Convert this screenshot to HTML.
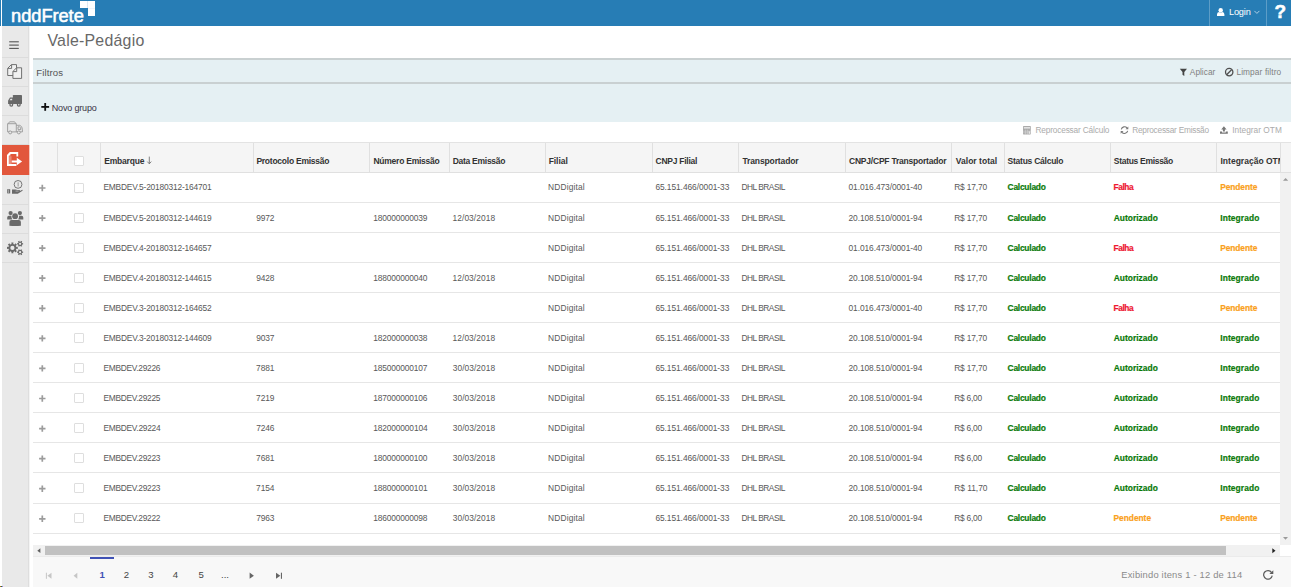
<!DOCTYPE html>
<html lang="pt-BR"><head><meta charset="utf-8"><title>nddFrete - Vale-Pedágio</title>
<style>
html,body{margin:0;padding:0;}
body{width:1291px;height:587px;overflow:hidden;background:#fff;position:relative;font-family:"Liberation Sans",sans-serif;}
.t{position:absolute;white-space:nowrap;line-height:normal;display:block;}
.b{position:absolute;}
svg{position:absolute;overflow:visible;}
</style></head><body>

<div class="b" style="left:0px;top:0px;width:1px;height:26px;background:#277db5;"></div>
<div class="b" style="left:2px;top:0px;width:1289px;height:26px;background:#277db5;"></div>
<div class="b" style="left:1209px;top:0px;width:1px;height:26px;background:rgba(255,255,255,.25);"></div>
<div class="b" style="left:1266px;top:0px;width:1px;height:26px;background:rgba(255,255,255,.25);"></div>
<div class="b" style="left:80px;top:1px;width:15px;height:7px;background:#fff;"></div>
<div class="b" style="left:88px;top:1px;width:7px;height:15px;background:#fff;"></div>
<div class="b" style="left:87px;top:1px;width:1px;height:7px;background:#dde9f3;"></div>
<div class="b" style="left:88px;top:8px;width:7px;height:1px;background:#f1f6fa;"></div>
<div class="b" style="left:2px;top:26px;width:27px;height:561px;background:#e9e9e9;border-right:1px solid #dedede;box-sizing:border-box;"></div>
<div class="b" style="left:29px;top:26px;width:1px;height:561px;background:#f4f4f4;"></div>
<div class="b" style="left:2px;top:57px;width:27px;height:1px;background:#dcdcdc;"></div>
<div class="b" style="left:2px;top:86px;width:27px;height:1px;background:#dcdcdc;"></div>
<div class="b" style="left:2px;top:115px;width:27px;height:1px;background:#dcdcdc;"></div>
<div class="b" style="left:2px;top:144px;width:27px;height:1px;background:#dcdcdc;"></div>
<div class="b" style="left:2px;top:204px;width:27px;height:1px;background:#dcdcdc;"></div>
<div class="b" style="left:2px;top:233px;width:27px;height:1px;background:#dcdcdc;"></div>
<div class="b" style="left:2px;top:262px;width:27px;height:1px;background:#dcdcdc;"></div>
<div class="b" style="left:2px;top:145px;width:27px;height:30px;background:#e2573c;"></div>
<div class="b" style="left:29px;top:145px;width:1px;height:30px;background:#f5c9c0;"></div>
<div class="b" style="left:33px;top:58px;width:1258px;height:64px;background:#e5f0f3;"></div>
<div class="b" style="left:33px;top:58px;width:1258px;height:2px;background:#c9d0d1;"></div>
<div class="b" style="left:33px;top:82px;width:1258px;height:2px;background:#c9d0d1;"></div>
<div class="b" style="left:33px;top:142px;width:1258px;height:31px;background:#f5f5f5;"></div>
<div class="b" style="left:33px;top:142px;width:1258px;height:1px;background:#e3e3e3;"></div>
<div class="b" style="left:33px;top:172px;width:1258px;height:1px;background:#e0e0e0;"></div>
<div class="b" style="left:57px;top:143px;width:1px;height:29px;background:#e0e0e0;"></div>
<div class="b" style="left:100px;top:143px;width:1px;height:29px;background:#e0e0e0;"></div>
<div class="b" style="left:253px;top:143px;width:1px;height:29px;background:#e0e0e0;"></div>
<div class="b" style="left:369px;top:143px;width:1px;height:29px;background:#e0e0e0;"></div>
<div class="b" style="left:449px;top:143px;width:1px;height:29px;background:#e0e0e0;"></div>
<div class="b" style="left:545px;top:143px;width:1px;height:29px;background:#e0e0e0;"></div>
<div class="b" style="left:652px;top:143px;width:1px;height:29px;background:#e0e0e0;"></div>
<div class="b" style="left:738px;top:143px;width:1px;height:29px;background:#e0e0e0;"></div>
<div class="b" style="left:845px;top:143px;width:1px;height:29px;background:#e0e0e0;"></div>
<div class="b" style="left:951px;top:143px;width:1px;height:29px;background:#e0e0e0;"></div>
<div class="b" style="left:1004px;top:143px;width:1px;height:29px;background:#e0e0e0;"></div>
<div class="b" style="left:1110px;top:143px;width:1px;height:29px;background:#e0e0e0;"></div>
<div class="b" style="left:1216px;top:143px;width:1px;height:29px;background:#e0e0e0;"></div>
<div class="b" style="left:1280px;top:143px;width:1px;height:29px;background:#e0e0e0;"></div>
<div class="b" style="left:33px;top:202px;width:1247px;height:1px;background:#e6e6e6;"></div>
<div class="b" style="left:33px;top:232px;width:1247px;height:1px;background:#e6e6e6;"></div>
<div class="b" style="left:33px;top:262px;width:1247px;height:1px;background:#e6e6e6;"></div>
<div class="b" style="left:33px;top:292px;width:1247px;height:1px;background:#e6e6e6;"></div>
<div class="b" style="left:33px;top:322px;width:1247px;height:1px;background:#e6e6e6;"></div>
<div class="b" style="left:33px;top:352px;width:1247px;height:1px;background:#e6e6e6;"></div>
<div class="b" style="left:33px;top:382px;width:1247px;height:1px;background:#e6e6e6;"></div>
<div class="b" style="left:33px;top:412px;width:1247px;height:1px;background:#e6e6e6;"></div>
<div class="b" style="left:33px;top:442px;width:1247px;height:1px;background:#e6e6e6;"></div>
<div class="b" style="left:33px;top:472px;width:1247px;height:1px;background:#e6e6e6;"></div>
<div class="b" style="left:33px;top:503px;width:1247px;height:1px;background:#e6e6e6;"></div>
<div class="b" style="left:33px;top:533px;width:1247px;height:1px;background:#e6e6e6;"></div>
<div class="b" style="left:1280px;top:173px;width:11px;height:372px;background:#f1f1f1;"></div>
<div class="b" style="left:33px;top:545px;width:1247px;height:11px;background:#f1f1f1;"></div>
<div class="b" style="left:45px;top:546px;width:1181px;height:9px;background:#c1c1c1;"></div>
<div class="b" style="left:33px;top:556px;width:1258px;height:31px;background:#f8f8f8;"></div>
<div class="b" style="left:33px;top:556px;width:1258px;height:1px;background:#ebebeb;"></div>
<div class="b" style="left:90px;top:557px;width:24px;height:2px;background:#3f51b5;"></div>
<div class="b" style="left:74px;top:156px;width:10px;height:10px;background:#fff;border:1px solid #dedede;box-sizing:border-box;border-radius:1px;"></div>
<div class="b" style="left:74px;top:183px;width:10px;height:10px;background:#fff;border:1px solid #dedede;box-sizing:border-box;border-radius:1px;"></div>
<div class="b" style="left:74px;top:213px;width:10px;height:10px;background:#fff;border:1px solid #dedede;box-sizing:border-box;border-radius:1px;"></div>
<div class="b" style="left:74px;top:243px;width:10px;height:10px;background:#fff;border:1px solid #dedede;box-sizing:border-box;border-radius:1px;"></div>
<div class="b" style="left:74px;top:273px;width:10px;height:10px;background:#fff;border:1px solid #dedede;box-sizing:border-box;border-radius:1px;"></div>
<div class="b" style="left:74px;top:303px;width:10px;height:10px;background:#fff;border:1px solid #dedede;box-sizing:border-box;border-radius:1px;"></div>
<div class="b" style="left:74px;top:333px;width:10px;height:10px;background:#fff;border:1px solid #dedede;box-sizing:border-box;border-radius:1px;"></div>
<div class="b" style="left:74px;top:363px;width:10px;height:10px;background:#fff;border:1px solid #dedede;box-sizing:border-box;border-radius:1px;"></div>
<div class="b" style="left:74px;top:393px;width:10px;height:10px;background:#fff;border:1px solid #dedede;box-sizing:border-box;border-radius:1px;"></div>
<div class="b" style="left:74px;top:423px;width:10px;height:10px;background:#fff;border:1px solid #dedede;box-sizing:border-box;border-radius:1px;"></div>
<div class="b" style="left:74px;top:453px;width:10px;height:10px;background:#fff;border:1px solid #dedede;box-sizing:border-box;border-radius:1px;"></div>
<div class="b" style="left:74px;top:483px;width:10px;height:10px;background:#fff;border:1px solid #dedede;box-sizing:border-box;border-radius:1px;"></div>
<div class="b" style="left:74px;top:513px;width:10px;height:10px;background:#fff;border:1px solid #dedede;box-sizing:border-box;border-radius:1px;"></div>
<div class="b" style="left:0px;top:586px;width:1px;height:1px;background:#c06a10;"></div>
<div class="b" style="left:1px;top:586px;width:1px;height:1px;background:#1a7a50;"></div>
<div class="b" style="left:2px;top:586px;width:1px;height:1px;background:#a070e0;"></div>
<svg width="1291" height="587" viewBox="0 0 1291 587" style="left:0;top:0">
<rect x="9.2" y="41.25" width="9.6" height="1.1" fill="#555"/>
<rect x="9.2" y="44.55" width="9.6" height="1.1" fill="#555"/>
<rect x="9.2" y="47.85" width="9.6" height="1.1" fill="#555"/>
<g fill="none" stroke="#6a6a6a" stroke-width="0.95" stroke-linejoin="round"><path d="M11.4,64.6 H16.5 V75.5 H7.7 V68.3 Z" fill="#f1f1f1"/><path d="M11.6,64.8 V68.4 H7.9"/><path d="M16.5,67.8 H21.6 V78.4 H12.9 V71.5 Z" fill="#f1f1f1"/><path d="M16.7,68 V71.6 H13.1"/></g>
<g fill="#686868"><rect x="12.9" y="95.1" width="9.1" height="8.9" rx="0.4"/><path d="M8.1,104 V100.4 L10,97.4 H13 V104 Z"/><circle cx="11.3" cy="104.8" r="2"/><circle cx="18.8" cy="104.8" r="2"/></g><circle cx="11.3" cy="104.8" r="0.8" fill="#e9e9e9"/><circle cx="18.8" cy="104.8" r="0.8" fill="#e9e9e9"/><path d="M9.6,100.3 L10.6,98.8 H12.2 V100.3 Z" fill="#e9e9e9"/>
<g fill="none" stroke="#949494" stroke-width="0.85" stroke-linejoin="round"><path d="M7.6,123.7 H16.3 V131.9 H7.6 Z"/><path d="M8.2,123.6 L9.6,121.8 H14.6 L15.8,123.6"/><path d="M16.3,125.3 H19.8 Q22.3,126.2 22.4,129.4 V131.9 H16.3"/><path d="M18,126.8 H19.6 Q20.8,127.4 20.9,129.6 H18 Z"/><circle cx="10.2" cy="132.4" r="1.5" fill="#e9e9e9"/><circle cx="18.8" cy="132.4" r="1.5" fill="#e9e9e9"/></g>
<g fill="none" stroke="#fff" stroke-width="1.8" stroke-linejoin="miter"><path d="M17.3,156.6 V153 H10.2 L7.9,155.4 V165 H16.4"/></g><path d="M11.7,160.5 H16.8 V157.7 L22.1,161.5 L16.8,165.3 V162.5 H11.7 Z" fill="#fff"/><rect x="8.8" y="156.2" width="2.7" height="7.9" fill="#fff" opacity="0.3"/><path d="M7.1,155.6 L10.4,152.2 V155.6 Z" fill="#fff"/>
<circle cx="18.05" cy="184.4" r="3.9" fill="none" stroke="#6a6a6a" stroke-width="0.9"/><rect x="17.7" y="182.3" width="0.8" height="4.2" fill="#888"/><rect x="7.2" y="189.2" width="3" height="4.2" fill="#6a6a6a"/><path d="M12,189.4 H15.4 Q16.6,189.4 17.4,189.9 H19.2 Q20.2,190 20,190.9 Q19.8,191.4 19,191.4 L21.8,189.9 Q23,189.7 22.5,190.7 L18.6,193.3 Q17.8,193.8 16.8,193.8 H12 Z" fill="#6a6a6a"/><path d="M15.5,191.1 H18.6" stroke="#e9e9e9" stroke-width="0.5"/><rect x="8.3" y="189.6" width="0.7" height="3.4" fill="#bbb"/>
<g fill="#6a6a6a"><circle cx="10.6" cy="213.1" r="2.1"/><circle cx="19.9" cy="213.1" r="2.1"/><path d="M7.2,219.4 V217.4 Q7.2,215.7 8.9,215.7 H11.4 Q11.2,217.4 12.3,219.4 Z"/><path d="M23.3,219.4 V217.4 Q23.3,215.7 21.6,215.7 H19.1 Q19.3,217.4 18.2,219.4 Z"/><circle cx="15.1" cy="216.2" r="2.9"/><path d="M9.4,225.7 V222 Q9.4,219.9 11.5,219.9 H18.8 Q20.9,219.9 20.9,222 V225.7 Q15.1,226.3 9.4,225.7 Z"/></g>
<path fill-rule="evenodd" fill="#6a6a6a" d="M17.79,246.83 L17.79,248.97 L16.41,248.76 L15.84,250.12 L16.97,250.96 L15.46,252.47 L14.62,251.34 L13.26,251.91 L13.47,253.29 L11.33,253.29 L11.54,251.91 L10.18,251.34 L9.34,252.47 L7.83,250.96 L8.96,250.12 L8.39,248.76 L7.01,248.97 L7.01,246.83 L8.39,247.04 L8.96,245.68 L7.83,244.84 L9.34,243.33 L10.18,244.46 L11.54,243.89 L11.33,242.51 L13.47,242.51 L13.26,243.89 L14.62,244.46 L15.46,243.33 L16.97,244.84 L15.84,245.68 L16.41,247.04 Z M10.30,247.90 a2.10,2.10 0 1,0 4.20,0 a2.10,2.10 0 1,0 -4.20,0 Z"/>
<path fill-rule="evenodd" fill="#6a6a6a" d="M23.09,243.00 L23.09,244.60 L22.21,244.41 L21.69,245.32 L22.29,245.99 L20.90,246.79 L20.62,245.94 L19.58,245.94 L19.30,246.79 L17.91,245.99 L18.51,245.32 L17.99,244.41 L17.11,244.60 L17.11,243.00 L17.99,243.19 L18.51,242.28 L17.91,241.61 L19.30,240.81 L19.58,241.66 L20.62,241.66 L20.90,240.81 L22.29,241.61 L21.69,242.28 L22.21,243.19 Z M19.00,243.80 a1.10,1.10 0 1,0 2.20,0 a1.10,1.10 0 1,0 -2.20,0 Z"/>
<path fill-rule="evenodd" fill="#6a6a6a" d="M23.09,251.40 L23.09,253.00 L22.21,252.81 L21.69,253.72 L22.29,254.39 L20.90,255.19 L20.62,254.34 L19.58,254.34 L19.30,255.19 L17.91,254.39 L18.51,253.72 L17.99,252.81 L17.11,253.00 L17.11,251.40 L17.99,251.59 L18.51,250.68 L17.91,250.01 L19.30,249.21 L19.58,250.06 L20.62,250.06 L20.90,249.21 L22.29,250.01 L21.69,250.68 L22.21,251.59 Z M19.00,252.20 a1.10,1.10 0 1,0 2.20,0 a1.10,1.10 0 1,0 -2.20,0 Z"/>
<circle cx="1220.7" cy="10.2" r="2.2" fill="#fff"/><path d="M1217,16 V14.6 Q1217,12.2 1219,12.0 Q1220.7,13.2 1222.4,12.0 Q1224.4,12.2 1224.4,14.6 V16 Z" fill="#fff"/>
<path d="M1254.4,10.9 L1256.9,13.4 L1259.4,10.9" fill="none" stroke="#cfe3f0" stroke-width="0.8"/>
<path d="M1179.8,68.8 H1187 L1184.3,72 V76 L1182.5,74.8 V72 Z" fill="#444"/>
<circle cx="1229.2" cy="72.1" r="3.7" fill="none" stroke="#505050" stroke-width="1.3"/><path d="M1231.8,69.5 L1226.6,74.7" stroke="#505050" stroke-width="1.3"/>
<path d="M39.1,188.0 H45.5 M42.3,184.8 V191.2" stroke="#9c9c9c" stroke-width="1.7" fill="none"/>
<path d="M39.1,218.1 H45.5 M42.3,214.9 V221.3" stroke="#9c9c9c" stroke-width="1.7" fill="none"/>
<path d="M39.1,248.1 H45.5 M42.3,244.9 V251.3" stroke="#9c9c9c" stroke-width="1.7" fill="none"/>
<path d="M39.1,278.2 H45.5 M42.3,275.0 V281.4" stroke="#9c9c9c" stroke-width="1.7" fill="none"/>
<path d="M39.1,308.3 H45.5 M42.3,305.1 V311.5" stroke="#9c9c9c" stroke-width="1.7" fill="none"/>
<path d="M39.1,338.4 H45.5 M42.3,335.2 V341.6" stroke="#9c9c9c" stroke-width="1.7" fill="none"/>
<path d="M39.1,368.4 H45.5 M42.3,365.2 V371.6" stroke="#9c9c9c" stroke-width="1.7" fill="none"/>
<path d="M39.1,398.5 H45.5 M42.3,395.3 V401.7" stroke="#9c9c9c" stroke-width="1.7" fill="none"/>
<path d="M39.1,428.6 H45.5 M42.3,425.4 V431.8" stroke="#9c9c9c" stroke-width="1.7" fill="none"/>
<path d="M39.1,458.6 H45.5 M42.3,455.4 V461.8" stroke="#9c9c9c" stroke-width="1.7" fill="none"/>
<path d="M39.1,488.7 H45.5 M42.3,485.5 V491.9" stroke="#9c9c9c" stroke-width="1.7" fill="none"/>
<path d="M39.1,518.8 H45.5 M42.3,515.6 V522.0" stroke="#9c9c9c" stroke-width="1.7" fill="none"/>
<rect x="41.3" y="106" width="7.8" height="1.8" fill="#111"/><rect x="44.3" y="103" width="1.8" height="7.8" fill="#111"/>
<rect x="1023" y="126" width="7.8" height="8.4" rx="0.6" fill="#aaa"/><rect x="1023.8" y="127.2" width="6.2" height="1.3" fill="#fff" opacity=".8"/><g stroke="#fff" stroke-width="0.4" opacity=".7"><path d="M1025.6,129.6V134.4M1027.6,129.6V134.4M1023,131.2H1030.8M1023,132.8H1028"/></g><rect x="1028.6" y="131.4" width="1.6" height="2.4" fill="#fff" opacity=".7"/>
<g fill="none" stroke="#777" stroke-width="1.1"><path d="M1121.3,129.3 A3.3,3.3 0 0 1 1127,127.9"/><path d="M1127.7,130.9 A3.3,3.3 0 0 1 1122,132.3"/></g><path d="M1128.3,126.5 V129.3 H1125.5 Z" fill="#777"/><path d="M1120.7,133.7 V130.9 H1123.5 Z" fill="#777"/>
<path d="M1223.9,126.3 L1226.6,129.4 H1224.9 V131.6 H1222.9 V129.4 H1221.2 Z" fill="#777"/><path d="M1220,131.4 H1222 V132.4 H1225.8 V131.4 H1227.8 V133.8 H1220 Z" fill="#777"/>
<path d="M149.3,156.6 V163.6 M147.3,161.6 L149.3,163.8 L151.3,161.6" fill="none" stroke="#666" stroke-width="0.8"/>
<path d="M1283,180.8 L1285.6,178 L1288.2,180.8 Z" fill="#9a9a9a"/>
<path d="M1283,537 L1285.5,539.7 L1288,537 Z" fill="#9a9a9a"/>
<path d="M40.4,548.3 V553 L37.3,550.65 Z" fill="#606060"/>
<path d="M1272.3,548.3 V553.3 L1275.5,550.8 Z" fill="#222"/>
<rect x="45.9" y="572.7" width="1" height="6.1" fill="#c6c6c6"/><path d="M51.5,572.7 V578.8 L47.4,575.75 Z" fill="#c6c6c6"/>
<path d="M77.3,572.7 V578.8 L73.6,575.75 Z" fill="#c6c6c6"/>
<path d="M249.6,572.5 V578.8 L253.9,575.65 Z" fill="#666"/>
<path d="M276,572.7 V578.8 L280.3,575.75 Z" fill="#666"/><rect x="280.9" y="572.7" width="1.1" height="6.1" fill="#666"/>
<path d="M1271.6,572.6 A4.3,4.3 0 1 0 1272.2,575.6" fill="none" stroke="#5c5c5c" stroke-width="1.25"/><path d="M1273.3,570.2 V574.1 H1269.4 Z" fill="#5c5c5c"/>
</svg>
<span id="t1" class="t" style="left:11.08px;top:5px;font-size:18.3px;font-weight:400;color:#fff;letter-spacing:-0.065px;-webkit-text-stroke:0.55px #fff;">nddFrete</span>
<span id="t2" class="t" style="left:1228.93px;top:7px;font-size:9.2px;font-weight:400;color:#fff;letter-spacing:-0.143px;">Login</span>
<span id="t3" class="t" style="left:1274.60px;top:1px;font-size:19px;font-weight:700;color:#fff;-webkit-text-stroke:0.5px #fff;">?</span>
<span id="t4" class="t" style="left:47.40px;top:32px;font-size:15.9px;font-weight:400;color:#686868;letter-spacing:0.241px;">Vale-Pedágio</span>
<span id="t5" class="t" style="left:36.31px;top:67px;font-size:9.6px;font-weight:400;color:#555;letter-spacing:0.092px;">Filtros</span>
<span id="t6" class="t" style="left:51.77px;top:103px;font-size:9.0px;font-weight:400;color:#3a3344;letter-spacing:-0.173px;">Novo grupo</span>
<span id="t7" class="t" style="left:1189.83px;top:67px;font-size:8.3px;font-weight:400;color:#808080;letter-spacing:0.018px;">Aplicar</span>
<span id="t8" class="t" style="left:1236.42px;top:67px;font-size:8.3px;font-weight:400;color:#808080;letter-spacing:0.115px;">Limpar filtro</span>
<span id="t9" class="t" style="left:1035.42px;top:125px;font-size:8.3px;font-weight:400;color:#ababab;letter-spacing:-0.163px;">Reprocessar Cálculo</span>
<span id="t10" class="t" style="left:1132.22px;top:125px;font-size:8.3px;font-weight:400;color:#ababab;letter-spacing:-0.241px;">Reprocessar Emissão</span>
<span id="t11" class="t" style="left:1232.19px;top:125px;font-size:8.3px;font-weight:400;color:#ababab;letter-spacing:0.025px;">Integrar OTM</span>
<span id="t12" class="t" style="left:104.18px;top:156px;font-size:8.5px;font-weight:700;color:#333;letter-spacing:-0.182px;">Embarque</span>
<span id="t13" class="t" style="left:256.38px;top:156px;font-size:8.5px;font-weight:700;color:#333;letter-spacing:-0.245px;">Protocolo Emissão</span>
<span id="t14" class="t" style="left:373.38px;top:156px;font-size:8.5px;font-weight:700;color:#333;letter-spacing:-0.233px;">Número Emissão</span>
<span id="t15" class="t" style="left:452.68px;top:156px;font-size:8.5px;font-weight:700;color:#333;letter-spacing:-0.269px;">Data Emissão</span>
<span id="t16" class="t" style="left:548.68px;top:156px;font-size:8.5px;font-weight:700;color:#333;letter-spacing:-0.052px;">Filial</span>
<span id="t17" class="t" style="left:655.62px;top:156px;font-size:8.5px;font-weight:700;color:#333;letter-spacing:-0.261px;">CNPJ Filial</span>
<span id="t18" class="t" style="left:742.45px;top:156px;font-size:8.5px;font-weight:700;color:#333;letter-spacing:-0.119px;">Transportador</span>
<span id="t19" class="t" style="left:849.02px;top:156px;font-size:8.5px;font-weight:700;color:#333;letter-spacing:-0.219px;">CNPJ/CPF Transportador</span>
<span id="t20" class="t" style="left:955.81px;top:156px;font-size:8.5px;font-weight:700;color:#333;letter-spacing:0.020px;">Valor total</span>
<span id="t21" class="t" style="left:1007.57px;top:156px;font-size:8.5px;font-weight:700;color:#333;letter-spacing:-0.248px;">Status Cálculo</span>
<span id="t22" class="t" style="left:1113.87px;top:156px;font-size:8.5px;font-weight:700;color:#333;letter-spacing:-0.307px;">Status Emissão</span>
<span id="t23" class="t" style="left:1220.47px;top:156px;font-size:8.5px;font-weight:700;color:#333;letter-spacing:0.014px;width:59.3px;overflow:hidden;">Integração OTM</span>
<span id="t24" class="t" style="left:103.38px;top:182px;font-size:8.4px;font-weight:400;color:#585858;letter-spacing:-0.180px;">EMBDEV.5-20180312-164701</span>
<span id="t25" class="t" style="left:548.12px;top:182px;font-size:8.4px;font-weight:400;color:#585858;letter-spacing:0.148px;">NDDigital</span>
<span id="t26" class="t" style="left:655.38px;top:182px;font-size:8.4px;font-weight:400;color:#585858;letter-spacing:-0.062px;">65.151.466/0001-33</span>
<span id="t27" class="t" style="left:741.42px;top:182px;font-size:8.4px;font-weight:400;color:#585858;letter-spacing:-0.498px;">DHL BRASIL</span>
<span id="t28" class="t" style="left:848.52px;top:182px;font-size:8.4px;font-weight:400;color:#585858;letter-spacing:-0.079px;">01.016.473/0001-40</span>
<span id="t29" class="t" style="left:954.18px;top:182px;font-size:8.4px;font-weight:400;color:#585858;letter-spacing:-0.141px;">R$ 17,70</span>
<span id="t30" class="t" style="left:1007.55px;top:182px;font-size:8.4px;font-weight:700;color:#0a7a0a;letter-spacing:-0.216px;-webkit-text-stroke:0.2px;">Calculado</span>
<span id="t31" class="t" style="left:1113.49px;top:182px;font-size:8.4px;font-weight:700;color:#ee1631;letter-spacing:-0.418px;-webkit-text-stroke:0.2px;">Falha</span>
<span id="t32" class="t" style="left:1220.19px;top:182px;font-size:8.4px;font-weight:700;color:#fa9f20;letter-spacing:-0.077px;-webkit-text-stroke:0.2px;">Pendente</span>
<span id="t33" class="t" style="left:103.38px;top:213px;font-size:8.4px;font-weight:400;color:#585858;letter-spacing:-0.181px;">EMBDEV.5-20180312-144619</span>
<span id="t34" class="t" style="left:256.22px;top:213px;font-size:8.4px;font-weight:400;color:#585858;letter-spacing:-0.117px;">9972</span>
<span id="t35" class="t" style="left:373.21px;top:213px;font-size:8.4px;font-weight:400;color:#585858;letter-spacing:-0.146px;">180000000039</span>
<span id="t36" class="t" style="left:452.51px;top:213px;font-size:8.4px;font-weight:400;color:#585858;letter-spacing:0.078px;">12/03/2018</span>
<span id="t37" class="t" style="left:548.12px;top:213px;font-size:8.4px;font-weight:400;color:#585858;letter-spacing:0.148px;">NDDigital</span>
<span id="t38" class="t" style="left:655.38px;top:213px;font-size:8.4px;font-weight:400;color:#585858;letter-spacing:-0.062px;">65.151.466/0001-33</span>
<span id="t39" class="t" style="left:741.42px;top:213px;font-size:8.4px;font-weight:400;color:#585858;letter-spacing:-0.498px;">DHL BRASIL</span>
<span id="t40" class="t" style="left:848.50px;top:213px;font-size:8.4px;font-weight:400;color:#585858;letter-spacing:-0.070px;">20.108.510/0001-94</span>
<span id="t41" class="t" style="left:954.18px;top:213px;font-size:8.4px;font-weight:400;color:#585858;letter-spacing:-0.141px;">R$ 17,70</span>
<span id="t42" class="t" style="left:1007.55px;top:213px;font-size:8.4px;font-weight:700;color:#0a7a0a;letter-spacing:-0.216px;-webkit-text-stroke:0.2px;">Calculado</span>
<span id="t43" class="t" style="left:1113.66px;top:213px;font-size:8.4px;font-weight:700;color:#0a7a0a;letter-spacing:0.046px;-webkit-text-stroke:0.2px;">Autorizado</span>
<span id="t44" class="t" style="left:1220.19px;top:213px;font-size:8.4px;font-weight:700;color:#0a7a0a;letter-spacing:0.123px;-webkit-text-stroke:0.2px;">Integrado</span>
<span id="t45" class="t" style="left:103.38px;top:243px;font-size:8.4px;font-weight:400;color:#585858;letter-spacing:-0.181px;">EMBDEV.4-20180312-164657</span>
<span id="t46" class="t" style="left:548.12px;top:243px;font-size:8.4px;font-weight:400;color:#585858;letter-spacing:0.148px;">NDDigital</span>
<span id="t47" class="t" style="left:655.38px;top:243px;font-size:8.4px;font-weight:400;color:#585858;letter-spacing:-0.062px;">65.151.466/0001-33</span>
<span id="t48" class="t" style="left:741.42px;top:243px;font-size:8.4px;font-weight:400;color:#585858;letter-spacing:-0.498px;">DHL BRASIL</span>
<span id="t49" class="t" style="left:848.52px;top:243px;font-size:8.4px;font-weight:400;color:#585858;letter-spacing:-0.079px;">01.016.473/0001-40</span>
<span id="t50" class="t" style="left:954.18px;top:243px;font-size:8.4px;font-weight:400;color:#585858;letter-spacing:-0.141px;">R$ 17,70</span>
<span id="t51" class="t" style="left:1007.55px;top:243px;font-size:8.4px;font-weight:700;color:#0a7a0a;letter-spacing:-0.216px;-webkit-text-stroke:0.2px;">Calculado</span>
<span id="t52" class="t" style="left:1113.49px;top:243px;font-size:8.4px;font-weight:700;color:#ee1631;letter-spacing:-0.418px;-webkit-text-stroke:0.2px;">Falha</span>
<span id="t53" class="t" style="left:1220.19px;top:243px;font-size:8.4px;font-weight:700;color:#fa9f20;letter-spacing:-0.077px;-webkit-text-stroke:0.2px;">Pendente</span>
<span id="t54" class="t" style="left:103.38px;top:273px;font-size:8.4px;font-weight:400;color:#585858;letter-spacing:-0.181px;">EMBDEV.4-20180312-144615</span>
<span id="t55" class="t" style="left:256.22px;top:273px;font-size:8.4px;font-weight:400;color:#585858;letter-spacing:-0.147px;">9428</span>
<span id="t56" class="t" style="left:373.21px;top:273px;font-size:8.4px;font-weight:400;color:#585858;letter-spacing:-0.148px;">188000000040</span>
<span id="t57" class="t" style="left:452.51px;top:273px;font-size:8.4px;font-weight:400;color:#585858;letter-spacing:0.078px;">12/03/2018</span>
<span id="t58" class="t" style="left:548.12px;top:273px;font-size:8.4px;font-weight:400;color:#585858;letter-spacing:0.148px;">NDDigital</span>
<span id="t59" class="t" style="left:655.38px;top:273px;font-size:8.4px;font-weight:400;color:#585858;letter-spacing:-0.062px;">65.151.466/0001-33</span>
<span id="t60" class="t" style="left:741.42px;top:273px;font-size:8.4px;font-weight:400;color:#585858;letter-spacing:-0.498px;">DHL BRASIL</span>
<span id="t61" class="t" style="left:848.50px;top:273px;font-size:8.4px;font-weight:400;color:#585858;letter-spacing:-0.070px;">20.108.510/0001-94</span>
<span id="t62" class="t" style="left:954.18px;top:273px;font-size:8.4px;font-weight:400;color:#585858;letter-spacing:-0.141px;">R$ 17,70</span>
<span id="t63" class="t" style="left:1007.55px;top:273px;font-size:8.4px;font-weight:700;color:#0a7a0a;letter-spacing:-0.216px;-webkit-text-stroke:0.2px;">Calculado</span>
<span id="t64" class="t" style="left:1113.66px;top:273px;font-size:8.4px;font-weight:700;color:#0a7a0a;letter-spacing:0.046px;-webkit-text-stroke:0.2px;">Autorizado</span>
<span id="t65" class="t" style="left:1220.19px;top:273px;font-size:8.4px;font-weight:700;color:#0a7a0a;letter-spacing:0.123px;-webkit-text-stroke:0.2px;">Integrado</span>
<span id="t66" class="t" style="left:103.38px;top:303px;font-size:8.4px;font-weight:400;color:#585858;letter-spacing:-0.179px;">EMBDEV.3-20180312-164652</span>
<span id="t67" class="t" style="left:548.12px;top:303px;font-size:8.4px;font-weight:400;color:#585858;letter-spacing:0.148px;">NDDigital</span>
<span id="t68" class="t" style="left:655.38px;top:303px;font-size:8.4px;font-weight:400;color:#585858;letter-spacing:-0.062px;">65.151.466/0001-33</span>
<span id="t69" class="t" style="left:741.42px;top:303px;font-size:8.4px;font-weight:400;color:#585858;letter-spacing:-0.498px;">DHL BRASIL</span>
<span id="t70" class="t" style="left:848.52px;top:303px;font-size:8.4px;font-weight:400;color:#585858;letter-spacing:-0.079px;">01.016.473/0001-40</span>
<span id="t71" class="t" style="left:954.18px;top:303px;font-size:8.4px;font-weight:400;color:#585858;letter-spacing:-0.141px;">R$ 17,70</span>
<span id="t72" class="t" style="left:1007.55px;top:303px;font-size:8.4px;font-weight:700;color:#0a7a0a;letter-spacing:-0.216px;-webkit-text-stroke:0.2px;">Calculado</span>
<span id="t73" class="t" style="left:1113.49px;top:303px;font-size:8.4px;font-weight:700;color:#ee1631;letter-spacing:-0.418px;-webkit-text-stroke:0.2px;">Falha</span>
<span id="t74" class="t" style="left:1220.19px;top:303px;font-size:8.4px;font-weight:700;color:#fa9f20;letter-spacing:-0.077px;-webkit-text-stroke:0.2px;">Pendente</span>
<span id="t75" class="t" style="left:103.38px;top:333px;font-size:8.4px;font-weight:400;color:#585858;letter-spacing:-0.181px;">EMBDEV.3-20180312-144609</span>
<span id="t76" class="t" style="left:256.24px;top:333px;font-size:8.4px;font-weight:400;color:#585858;letter-spacing:-0.158px;">9037</span>
<span id="t77" class="t" style="left:373.21px;top:333px;font-size:8.4px;font-weight:400;color:#585858;letter-spacing:-0.145px;">182000000038</span>
<span id="t78" class="t" style="left:452.51px;top:333px;font-size:8.4px;font-weight:400;color:#585858;letter-spacing:0.078px;">12/03/2018</span>
<span id="t79" class="t" style="left:548.12px;top:333px;font-size:8.4px;font-weight:400;color:#585858;letter-spacing:0.148px;">NDDigital</span>
<span id="t80" class="t" style="left:655.38px;top:333px;font-size:8.4px;font-weight:400;color:#585858;letter-spacing:-0.062px;">65.151.466/0001-33</span>
<span id="t81" class="t" style="left:741.42px;top:333px;font-size:8.4px;font-weight:400;color:#585858;letter-spacing:-0.498px;">DHL BRASIL</span>
<span id="t82" class="t" style="left:848.50px;top:333px;font-size:8.4px;font-weight:400;color:#585858;letter-spacing:-0.070px;">20.108.510/0001-94</span>
<span id="t83" class="t" style="left:954.18px;top:333px;font-size:8.4px;font-weight:400;color:#585858;letter-spacing:-0.141px;">R$ 17,70</span>
<span id="t84" class="t" style="left:1007.55px;top:333px;font-size:8.4px;font-weight:700;color:#0a7a0a;letter-spacing:-0.216px;-webkit-text-stroke:0.2px;">Calculado</span>
<span id="t85" class="t" style="left:1113.66px;top:333px;font-size:8.4px;font-weight:700;color:#0a7a0a;letter-spacing:0.046px;-webkit-text-stroke:0.2px;">Autorizado</span>
<span id="t86" class="t" style="left:1220.19px;top:333px;font-size:8.4px;font-weight:700;color:#0a7a0a;letter-spacing:0.123px;-webkit-text-stroke:0.2px;">Integrado</span>
<span id="t87" class="t" style="left:103.41px;top:363px;font-size:8.4px;font-weight:400;color:#585858;letter-spacing:-0.288px;">EMBDEV.29226</span>
<span id="t88" class="t" style="left:256.09px;top:363px;font-size:8.4px;font-weight:400;color:#585858;letter-spacing:-0.073px;">7881</span>
<span id="t89" class="t" style="left:373.21px;top:363px;font-size:8.4px;font-weight:400;color:#585858;letter-spacing:-0.150px;">185000000107</span>
<span id="t90" class="t" style="left:452.76px;top:363px;font-size:8.4px;font-weight:400;color:#585858;letter-spacing:0.046px;">30/03/2018</span>
<span id="t91" class="t" style="left:548.12px;top:363px;font-size:8.4px;font-weight:400;color:#585858;letter-spacing:0.148px;">NDDigital</span>
<span id="t92" class="t" style="left:655.38px;top:363px;font-size:8.4px;font-weight:400;color:#585858;letter-spacing:-0.062px;">65.151.466/0001-33</span>
<span id="t93" class="t" style="left:741.42px;top:363px;font-size:8.4px;font-weight:400;color:#585858;letter-spacing:-0.498px;">DHL BRASIL</span>
<span id="t94" class="t" style="left:848.50px;top:363px;font-size:8.4px;font-weight:400;color:#585858;letter-spacing:-0.070px;">20.108.510/0001-94</span>
<span id="t95" class="t" style="left:954.18px;top:363px;font-size:8.4px;font-weight:400;color:#585858;letter-spacing:-0.141px;">R$ 17,70</span>
<span id="t96" class="t" style="left:1007.55px;top:363px;font-size:8.4px;font-weight:700;color:#0a7a0a;letter-spacing:-0.216px;-webkit-text-stroke:0.2px;">Calculado</span>
<span id="t97" class="t" style="left:1113.66px;top:363px;font-size:8.4px;font-weight:700;color:#0a7a0a;letter-spacing:0.046px;-webkit-text-stroke:0.2px;">Autorizado</span>
<span id="t98" class="t" style="left:1220.19px;top:363px;font-size:8.4px;font-weight:700;color:#0a7a0a;letter-spacing:0.123px;-webkit-text-stroke:0.2px;">Integrado</span>
<span id="t99" class="t" style="left:103.41px;top:393px;font-size:8.4px;font-weight:400;color:#585858;letter-spacing:-0.288px;">EMBDEV.29225</span>
<span id="t100" class="t" style="left:256.11px;top:393px;font-size:8.4px;font-weight:400;color:#585858;letter-spacing:-0.107px;">7219</span>
<span id="t101" class="t" style="left:373.21px;top:393px;font-size:8.4px;font-weight:400;color:#585858;letter-spacing:-0.146px;">187000000106</span>
<span id="t102" class="t" style="left:452.76px;top:393px;font-size:8.4px;font-weight:400;color:#585858;letter-spacing:0.046px;">30/03/2018</span>
<span id="t103" class="t" style="left:548.12px;top:393px;font-size:8.4px;font-weight:400;color:#585858;letter-spacing:0.148px;">NDDigital</span>
<span id="t104" class="t" style="left:655.38px;top:393px;font-size:8.4px;font-weight:400;color:#585858;letter-spacing:-0.062px;">65.151.466/0001-33</span>
<span id="t105" class="t" style="left:741.42px;top:393px;font-size:8.4px;font-weight:400;color:#585858;letter-spacing:-0.498px;">DHL BRASIL</span>
<span id="t106" class="t" style="left:848.50px;top:393px;font-size:8.4px;font-weight:400;color:#585858;letter-spacing:-0.070px;">20.108.510/0001-94</span>
<span id="t107" class="t" style="left:954.20px;top:393px;font-size:8.4px;font-weight:400;color:#585858;letter-spacing:-0.238px;">R$ 6,00</span>
<span id="t108" class="t" style="left:1007.55px;top:393px;font-size:8.4px;font-weight:700;color:#0a7a0a;letter-spacing:-0.216px;-webkit-text-stroke:0.2px;">Calculado</span>
<span id="t109" class="t" style="left:1113.66px;top:393px;font-size:8.4px;font-weight:700;color:#0a7a0a;letter-spacing:0.046px;-webkit-text-stroke:0.2px;">Autorizado</span>
<span id="t110" class="t" style="left:1220.19px;top:393px;font-size:8.4px;font-weight:700;color:#0a7a0a;letter-spacing:0.123px;-webkit-text-stroke:0.2px;">Integrado</span>
<span id="t111" class="t" style="left:103.41px;top:423px;font-size:8.4px;font-weight:400;color:#585858;letter-spacing:-0.278px;">EMBDEV.29224</span>
<span id="t112" class="t" style="left:256.15px;top:423px;font-size:8.4px;font-weight:400;color:#585858;letter-spacing:-0.124px;">7246</span>
<span id="t113" class="t" style="left:373.21px;top:423px;font-size:8.4px;font-weight:400;color:#585858;letter-spacing:-0.137px;">182000000104</span>
<span id="t114" class="t" style="left:452.76px;top:423px;font-size:8.4px;font-weight:400;color:#585858;letter-spacing:0.046px;">30/03/2018</span>
<span id="t115" class="t" style="left:548.12px;top:423px;font-size:8.4px;font-weight:400;color:#585858;letter-spacing:0.148px;">NDDigital</span>
<span id="t116" class="t" style="left:655.38px;top:423px;font-size:8.4px;font-weight:400;color:#585858;letter-spacing:-0.062px;">65.151.466/0001-33</span>
<span id="t117" class="t" style="left:741.42px;top:423px;font-size:8.4px;font-weight:400;color:#585858;letter-spacing:-0.498px;">DHL BRASIL</span>
<span id="t118" class="t" style="left:848.50px;top:423px;font-size:8.4px;font-weight:400;color:#585858;letter-spacing:-0.070px;">20.108.510/0001-94</span>
<span id="t119" class="t" style="left:954.20px;top:423px;font-size:8.4px;font-weight:400;color:#585858;letter-spacing:-0.238px;">R$ 6,00</span>
<span id="t120" class="t" style="left:1007.55px;top:423px;font-size:8.4px;font-weight:700;color:#0a7a0a;letter-spacing:-0.216px;-webkit-text-stroke:0.2px;">Calculado</span>
<span id="t121" class="t" style="left:1113.66px;top:423px;font-size:8.4px;font-weight:700;color:#0a7a0a;letter-spacing:0.046px;-webkit-text-stroke:0.2px;">Autorizado</span>
<span id="t122" class="t" style="left:1220.19px;top:423px;font-size:8.4px;font-weight:700;color:#0a7a0a;letter-spacing:0.123px;-webkit-text-stroke:0.2px;">Integrado</span>
<span id="t123" class="t" style="left:103.41px;top:453px;font-size:8.4px;font-weight:400;color:#585858;letter-spacing:-0.283px;">EMBDEV.29223</span>
<span id="t124" class="t" style="left:256.09px;top:453px;font-size:8.4px;font-weight:400;color:#585858;letter-spacing:-0.073px;">7681</span>
<span id="t125" class="t" style="left:373.21px;top:453px;font-size:8.4px;font-weight:400;color:#585858;letter-spacing:-0.148px;">180000000100</span>
<span id="t126" class="t" style="left:452.76px;top:453px;font-size:8.4px;font-weight:400;color:#585858;letter-spacing:0.046px;">30/03/2018</span>
<span id="t127" class="t" style="left:548.12px;top:453px;font-size:8.4px;font-weight:400;color:#585858;letter-spacing:0.148px;">NDDigital</span>
<span id="t128" class="t" style="left:655.38px;top:453px;font-size:8.4px;font-weight:400;color:#585858;letter-spacing:-0.062px;">65.151.466/0001-33</span>
<span id="t129" class="t" style="left:741.42px;top:453px;font-size:8.4px;font-weight:400;color:#585858;letter-spacing:-0.498px;">DHL BRASIL</span>
<span id="t130" class="t" style="left:848.50px;top:453px;font-size:8.4px;font-weight:400;color:#585858;letter-spacing:-0.070px;">20.108.510/0001-94</span>
<span id="t131" class="t" style="left:954.20px;top:453px;font-size:8.4px;font-weight:400;color:#585858;letter-spacing:-0.238px;">R$ 6,00</span>
<span id="t132" class="t" style="left:1007.55px;top:453px;font-size:8.4px;font-weight:700;color:#0a7a0a;letter-spacing:-0.216px;-webkit-text-stroke:0.2px;">Calculado</span>
<span id="t133" class="t" style="left:1113.66px;top:453px;font-size:8.4px;font-weight:700;color:#0a7a0a;letter-spacing:0.046px;-webkit-text-stroke:0.2px;">Autorizado</span>
<span id="t134" class="t" style="left:1220.19px;top:453px;font-size:8.4px;font-weight:700;color:#0a7a0a;letter-spacing:0.123px;-webkit-text-stroke:0.2px;">Integrado</span>
<span id="t135" class="t" style="left:103.41px;top:483px;font-size:8.4px;font-weight:400;color:#585858;letter-spacing:-0.283px;">EMBDEV.29223</span>
<span id="t136" class="t" style="left:256.10px;top:483px;font-size:8.4px;font-weight:400;color:#585858;letter-spacing:-0.073px;">7154</span>
<span id="t137" class="t" style="left:373.21px;top:483px;font-size:8.4px;font-weight:400;color:#585858;letter-spacing:-0.140px;">188000000101</span>
<span id="t138" class="t" style="left:452.76px;top:483px;font-size:8.4px;font-weight:400;color:#585858;letter-spacing:0.046px;">30/03/2018</span>
<span id="t139" class="t" style="left:548.12px;top:483px;font-size:8.4px;font-weight:400;color:#585858;letter-spacing:0.148px;">NDDigital</span>
<span id="t140" class="t" style="left:655.38px;top:483px;font-size:8.4px;font-weight:400;color:#585858;letter-spacing:-0.062px;">65.151.466/0001-33</span>
<span id="t141" class="t" style="left:741.42px;top:483px;font-size:8.4px;font-weight:400;color:#585858;letter-spacing:-0.498px;">DHL BRASIL</span>
<span id="t142" class="t" style="left:848.50px;top:483px;font-size:8.4px;font-weight:400;color:#585858;letter-spacing:-0.070px;">20.108.510/0001-94</span>
<span id="t143" class="t" style="left:954.18px;top:483px;font-size:8.4px;font-weight:400;color:#585858;letter-spacing:-0.013px;">R$ 11,70</span>
<span id="t144" class="t" style="left:1007.55px;top:483px;font-size:8.4px;font-weight:700;color:#0a7a0a;letter-spacing:-0.216px;-webkit-text-stroke:0.2px;">Calculado</span>
<span id="t145" class="t" style="left:1113.66px;top:483px;font-size:8.4px;font-weight:700;color:#0a7a0a;letter-spacing:0.046px;-webkit-text-stroke:0.2px;">Autorizado</span>
<span id="t146" class="t" style="left:1220.19px;top:483px;font-size:8.4px;font-weight:700;color:#0a7a0a;letter-spacing:0.123px;-webkit-text-stroke:0.2px;">Integrado</span>
<span id="t147" class="t" style="left:103.41px;top:513px;font-size:8.4px;font-weight:400;color:#585858;letter-spacing:-0.281px;">EMBDEV.29222</span>
<span id="t148" class="t" style="left:256.15px;top:513px;font-size:8.4px;font-weight:400;color:#585858;letter-spacing:-0.124px;">7963</span>
<span id="t149" class="t" style="left:373.21px;top:513px;font-size:8.4px;font-weight:400;color:#585858;letter-spacing:-0.145px;">186000000098</span>
<span id="t150" class="t" style="left:452.76px;top:513px;font-size:8.4px;font-weight:400;color:#585858;letter-spacing:0.046px;">30/03/2018</span>
<span id="t151" class="t" style="left:548.12px;top:513px;font-size:8.4px;font-weight:400;color:#585858;letter-spacing:0.148px;">NDDigital</span>
<span id="t152" class="t" style="left:655.38px;top:513px;font-size:8.4px;font-weight:400;color:#585858;letter-spacing:-0.062px;">65.151.466/0001-33</span>
<span id="t153" class="t" style="left:741.42px;top:513px;font-size:8.4px;font-weight:400;color:#585858;letter-spacing:-0.498px;">DHL BRASIL</span>
<span id="t154" class="t" style="left:848.50px;top:513px;font-size:8.4px;font-weight:400;color:#585858;letter-spacing:-0.070px;">20.108.510/0001-94</span>
<span id="t155" class="t" style="left:954.20px;top:513px;font-size:8.4px;font-weight:400;color:#585858;letter-spacing:-0.238px;">R$ 6,00</span>
<span id="t156" class="t" style="left:1007.55px;top:513px;font-size:8.4px;font-weight:700;color:#0a7a0a;letter-spacing:-0.216px;-webkit-text-stroke:0.2px;">Calculado</span>
<span id="t157" class="t" style="left:1113.49px;top:513px;font-size:8.4px;font-weight:700;color:#fa9f20;letter-spacing:-0.019px;-webkit-text-stroke:0.2px;">Pendente</span>
<span id="t158" class="t" style="left:1220.19px;top:513px;font-size:8.4px;font-weight:700;color:#fa9f20;letter-spacing:-0.077px;-webkit-text-stroke:0.2px;">Pendente</span>
<span id="t159" class="t" style="left:99.43px;top:569px;font-size:9.6px;font-weight:700;color:#3f51b5;">1</span>
<span id="t160" class="t" style="left:123.85px;top:569px;font-size:9.6px;font-weight:400;color:#444;">2</span>
<span id="t161" class="t" style="left:148.34px;top:569px;font-size:9.6px;font-weight:400;color:#444;">3</span>
<span id="t162" class="t" style="left:172.81px;top:569px;font-size:9.6px;font-weight:400;color:#444;">4</span>
<span id="t163" class="t" style="left:198.46px;top:569px;font-size:9.6px;font-weight:400;color:#444;">5</span>
<span id="t164" class="t" style="left:220.99px;top:569px;font-size:9.6px;font-weight:400;color:#444;letter-spacing:-0.002px;">...</span>
<span id="t165" class="t" style="left:1121.29px;top:569px;font-size:9.4px;font-weight:400;color:#8a8a8a;letter-spacing:0.197px;">Exibindo itens 1 - 12 de 114</span>
</body></html>
